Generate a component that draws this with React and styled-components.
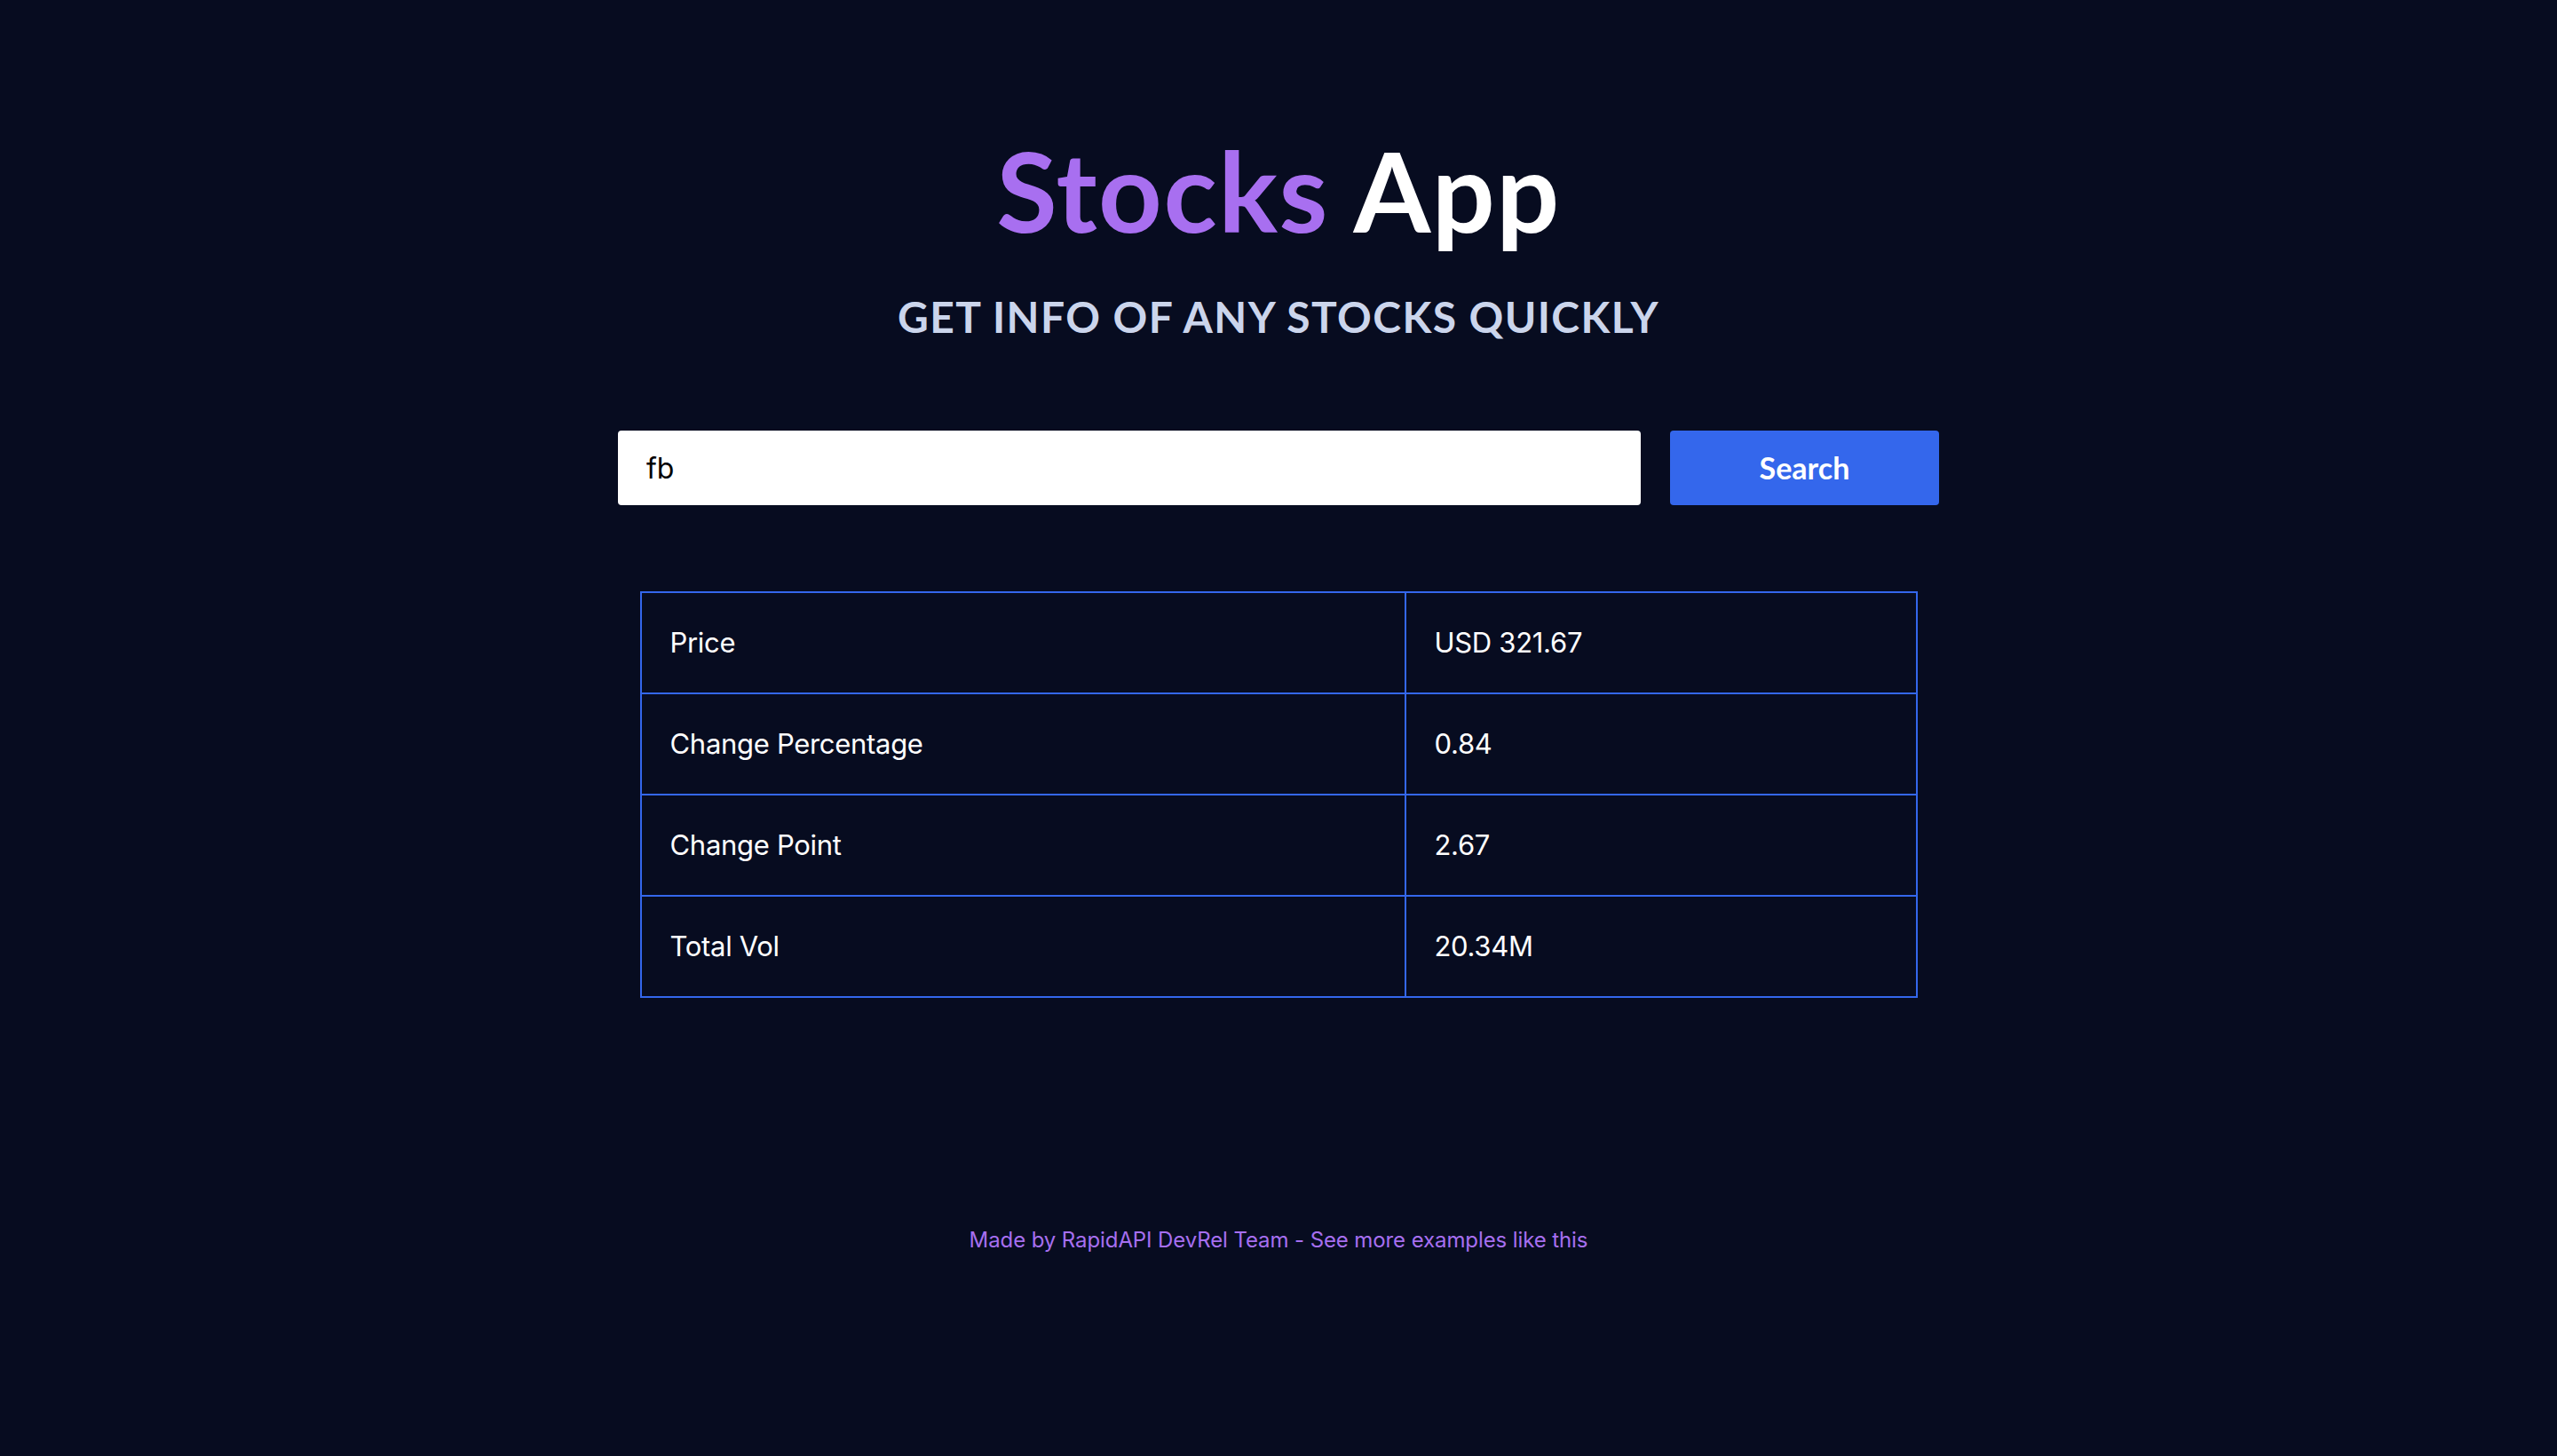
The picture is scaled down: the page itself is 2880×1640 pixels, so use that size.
import React, { useState } from "react";
import styled, { createGlobalStyle } from "styled-components";

const GlobalStyle = createGlobalStyle`
  html, body {
    margin: 0;
    padding: 0;
    background: #070c20;
  }

  body {
    font-family: Inter, "Liberation Sans", sans-serif;
    color: #ffffff;
  }

  * {
    box-sizing: border-box;
  }
`;

const rows = [
  { label: "Price", value: "USD 321.67" },
  { label: "Change Percentage", value: "0.84" },
  { label: "Change Point", value: "2.67" },
  { label: "Total Vol", value: "20.34M" },
];

export default function App() {
  const [symbol, setSymbol] = useState("fb");

  return (
    <>
      <GlobalStyle />
      <Page>
        <Title>
          <span className="accent">Stocks</span> App
        </Title>
        <Subtitle>Get info of any stocks quickly</Subtitle>

        <SearchBar onSubmit={(e) => e.preventDefault()}>
          <SearchInput
            value={symbol}
            onChange={(e) => setSymbol(e.target.value)}
          />
          <SearchButton type="submit">Search</SearchButton>
        </SearchBar>

        <InfoTable>
          <tbody>
            {rows.map((row) => (
              <tr key={row.label}>
                <LabelCell>{row.label}</LabelCell>
                <ValueCell>{row.value}</ValueCell>
              </tr>
            ))}
          </tbody>
        </InfoTable>

        <Footer>
          Made by RapidAPI DevRel Team - See more examples like this
        </Footer>
      </Page>
    </>
  );
}

const Page = styled.main`
  min-height: 1640px;
  display: flex;
  flex-direction: column;
  align-items: center;
  padding-top: 152px;
`;

const Title = styled.h1`
  margin: 0;
  font-family: Lato, "Open Sans", sans-serif;
  font-weight: 700;
  font-size: 125px;
  line-height: 1;
  letter-spacing: 1.5px;
  color: #ffffff;

  .accent {
    color: #a86ff0;
  }
`;

const Subtitle = styled.h2`
  margin: 56px 0 0;
  font-family: Lato, "Open Sans", sans-serif;
  font-weight: 700;
  font-size: 48px;
  line-height: 1;
  letter-spacing: 1.4px;
  text-transform: uppercase;
  color: #cbd5ec;
`;

const SearchBar = styled.form`
  margin-top: 104px;
  display: flex;
  gap: 33px;
  width: 1488px;
  height: 84px;
`;

const SearchInput = styled.input`
  flex: 1;
  height: 100%;
  border: none;
  border-radius: 4px;
  padding: 0 32px;
  background: #ffffff;
  color: #000000;
  font-family: Inter, "Liberation Sans", sans-serif;
  font-size: 32px;
  outline: none;
`;

const SearchButton = styled.button`
  width: 303px;
  height: 100%;
  border: none;
  border-radius: 4px;
  padding: 0 0 2px;
  background: #3467ec;
  color: #ffffff;
  font-family: Lato, "Open Sans", sans-serif;
  font-weight: 700;
  font-size: 34px;
  cursor: pointer;
`;

const InfoTable = styled.table`
  margin-top: 97px;
  width: 1439px;
  border-collapse: collapse;
  border: 2px solid #3467ec;
`;

const Cell = styled.td`
  border: 2px solid #3467ec;
  padding: 32px 32px;
  font-size: 31px;
  line-height: 48px;
  letter-spacing: -0.3px;
  color: #ffffff;
  text-align: left;
`;

const LabelCell = styled(Cell)`
  width: 861px;
`;

const ValueCell = styled(Cell)``;

const Footer = styled.footer`
  margin-top: 255px;
  font-size: 24px;
  line-height: 36px;
  letter-spacing: -0.1px;
  color: #a66ff0;
`;
